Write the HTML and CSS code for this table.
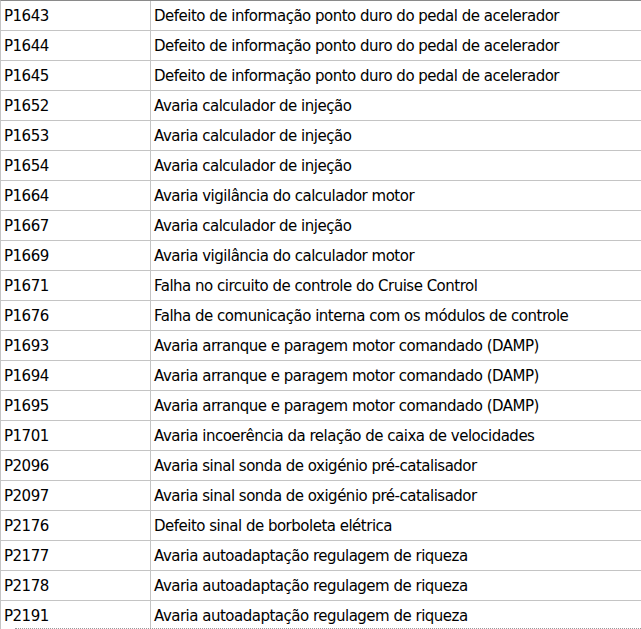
FILE: index.html
```html
<!DOCTYPE html>
<html lang="pt">
<head>
<meta charset="utf-8">
<title>Códigos de falha</title>
<link rel="stylesheet" href="styles.css">
</head>
<body>
<div class="list">
  <div class="row"><div class="code">P1643</div><div class="desc">Defeito de informação ponto duro do pedal de acelerador</div></div>
  <div class="row"><div class="code">P1644</div><div class="desc">Defeito de informação ponto duro do pedal de acelerador</div></div>
  <div class="row"><div class="code">P1645</div><div class="desc">Defeito de informação ponto duro do pedal de acelerador</div></div>
  <div class="row"><div class="code">P1652</div><div class="desc">Avaria calculador de injeção</div></div>
  <div class="row"><div class="code">P1653</div><div class="desc">Avaria calculador de injeção</div></div>
  <div class="row"><div class="code">P1654</div><div class="desc">Avaria calculador de injeção</div></div>
  <div class="row"><div class="code">P1664</div><div class="desc">Avaria vigilância do calculador motor</div></div>
  <div class="row"><div class="code">P1667</div><div class="desc">Avaria calculador de injeção</div></div>
  <div class="row"><div class="code">P1669</div><div class="desc">Avaria vigilância do calculador motor</div></div>
  <div class="row"><div class="code">P1671</div><div class="desc">Falha no circuito de controle do Cruise Control</div></div>
  <div class="row"><div class="code">P1676</div><div class="desc">Falha de comunicação interna com os módulos de controle</div></div>
  <div class="row"><div class="code">P1693</div><div class="desc">Avaria arranque e paragem motor comandado (DAMP)</div></div>
  <div class="row"><div class="code">P1694</div><div class="desc">Avaria arranque e paragem motor comandado (DAMP)</div></div>
  <div class="row"><div class="code">P1695</div><div class="desc">Avaria arranque e paragem motor comandado (DAMP)</div></div>
  <div class="row"><div class="code">P1701</div><div class="desc">Avaria incoerência da relação de caixa de velocidades</div></div>
  <div class="row"><div class="code">P2096</div><div class="desc">Avaria sinal sonda de oxigénio pré-catalisador</div></div>
  <div class="row"><div class="code">P2097</div><div class="desc">Avaria sinal sonda de oxigénio pré-catalisador</div></div>
  <div class="row"><div class="code">P2176</div><div class="desc">Defeito sinal de borboleta elétrica</div></div>
  <div class="row"><div class="code">P2177</div><div class="desc">Avaria autoadaptação regulagem de riqueza</div></div>
  <div class="row"><div class="code">P2178</div><div class="desc">Avaria autoadaptação regulagem de riqueza</div></div>
  <div class="row focused"><div class="code">P2191</div><div class="desc">Avaria autoadaptação regulagem de riqueza</div></div>
</div>
</body>
</html>
```
FILE: styles.css
```css
html, body {
  margin: 0;
  padding: 0;
  background: #ffffff;
  overflow: hidden;
}
.list {
  border-top: 1px solid #8a8a8a;
  border-left: 1px solid #c4c4c4;
  font-family: "DejaVu Sans", Verdana, sans-serif;
  font-size: 15px;
  letter-spacing: -0.5px;
  color: #000000;
}
.row {
  display: grid;
  grid-template-columns: 150px 1fr;
  height: 29px;
  border-bottom: 1px solid #c4c4c4;
  position: relative;
}
.code, .desc {
  display: flex;
  align-items: center;
  padding-left: 3px;
  white-space: nowrap;
}
.code {
  border-right: 1px solid #c4c4c4;
}
.focused::after {
  content: "";
  position: absolute;
  left: 14px;
  right: 0;
  bottom: 1px;
  border-bottom: 1px dotted #999999;
}
```
